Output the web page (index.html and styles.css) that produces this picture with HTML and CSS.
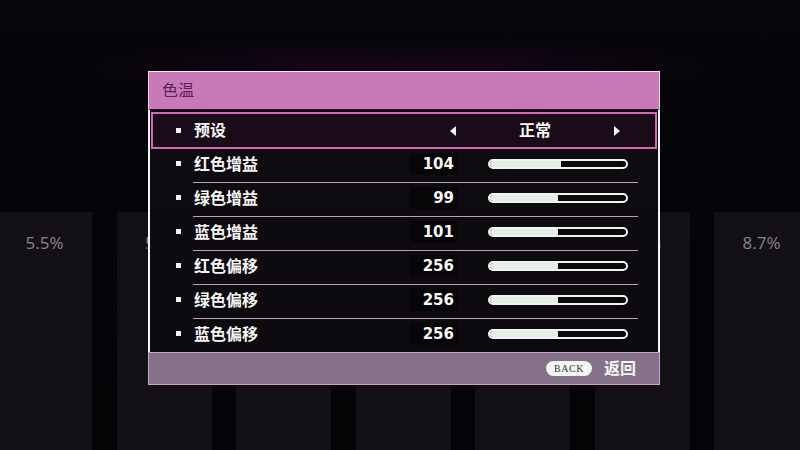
FILE: index.html
```html
<!DOCTYPE html>
<html lang="zh-CN">
<head>
    <meta charset="UTF-8">
    <meta name="viewport" content="width=device-width, initial-scale=1.0">
    <title>色温</title>
    <link rel="stylesheet" href="styles.css">
</head>
<body>
    <div class="screen">
        <!-- chart columns behind the OSD -->
        <div class="chart">
            <div class="chart-col"><span class="chart-pct">5.5%</span></div>
            <div class="chart-col"><span class="chart-pct">5.6%</span></div>
            <div class="chart-col"><span class="chart-pct">6.1%</span></div>
            <div class="chart-col"><span class="chart-pct">7.0%</span></div>
            <div class="chart-col"><span class="chart-pct">7.4%</span></div>
            <div class="chart-col"><span class="chart-pct">8.1%</span></div>
            <div class="chart-col"><span class="chart-pct">8.7%</span></div>
        </div>

        <div class="osd">
            <div class="osd-title">色温</div>
            <div class="osd-body">
                <div class="row row-selected">
                    <span class="bullet"></span>
                    <span class="label">预设</span>
                    <span class="arrow arrow-left"></span>
                    <span class="choice">正常</span>
                    <span class="arrow arrow-right"></span>
                </div>

                <div class="row">
                    <span class="bullet"></span>
                    <span class="label">红色增益</span>
                    <span class="value">104</span>
                    <span class="slider"><span class="slider-fill" style="width: 52%"></span></span>
                </div>
                <div class="sep"></div>
                <div class="row">
                    <span class="bullet"></span>
                    <span class="label">绿色增益</span>
                    <span class="value">99</span>
                    <span class="slider"><span class="slider-fill" style="width: 50%"></span></span>
                </div>
                <div class="sep"></div>
                <div class="row">
                    <span class="bullet"></span>
                    <span class="label">蓝色增益</span>
                    <span class="value">101</span>
                    <span class="slider"><span class="slider-fill" style="width: 50%"></span></span>
                </div>
                <div class="sep"></div>
                <div class="row">
                    <span class="bullet"></span>
                    <span class="label">红色偏移</span>
                    <span class="value">256</span>
                    <span class="slider"><span class="slider-fill" style="width: 50%"></span></span>
                </div>
                <div class="sep"></div>
                <div class="row">
                    <span class="bullet"></span>
                    <span class="label">绿色偏移</span>
                    <span class="value">256</span>
                    <span class="slider"><span class="slider-fill" style="width: 50%"></span></span>
                </div>
                <div class="sep"></div>
                <div class="row">
                    <span class="bullet"></span>
                    <span class="label">蓝色偏移</span>
                    <span class="value">256</span>
                    <span class="slider"><span class="slider-fill" style="width: 50%"></span></span>
                </div>
            </div>
            <div class="osd-footer">
                <span class="back-pill">BACK</span>
                <span class="back-text">返回</span>
            </div>
        </div>
    </div>
</body>
</html>
```

FILE: styles.css
```css
body{
    margin: 0;
    background-color: #050306;
    font-family: "Noto Sans CJK SC", "Noto Sans", sans-serif;
}
.screen{
    position: relative;
    width: 800px;
    height: 450px;
    overflow: hidden;
    background:
        radial-gradient(ellipse 320px 30px at 400px 68px, rgba(50, 8, 45, 0.45), transparent),
        linear-gradient(#06050a, #050306);
}

/***************** -chart- *******************/

.chart{
    display: flex;
    gap: 24.5px;
    margin-left: -3px;
    padding-top: 212px;
}
.chart-col{
    flex: none;
    width: 95px;
    height: 238px;
    background-color: #131015;
    text-align: center;
}
.chart-pct{
    display: block;
    margin-top: 19px;
    font-family: "Open Sans", "Noto Sans", sans-serif;
    font-size: 17px;
    color: #8a8486;
}

/***************** -osd- *******************/

.osd{
    position: absolute;
    left: 148px;
    top: 71px;
    width: 512px;
    border-top: 1px solid #f3eef3;
}
.osd-title{
    height: 37px;
    padding-left: 13px;
    background-color: #c87ab6;
    border-left: 1px solid #e8d0e4;
    border-right: 1px solid #e8d0e4;
    color: #5c205e;
    font-size: 16px;
    line-height: 35px;
}
.osd-body{
    padding: 2px 0 0;
    background: linear-gradient(#0e0c11, #0c0a0e);
    border-left: 2px solid #f1f4f1;
    border-right: 2px solid #f1f4f1;
    border-top: 1px solid #2a0d28;
}
/* row contents sit a little above the middle, close to the line above */
.row{
    box-sizing: border-box;
    display: flex;
    align-items: center;
    height: 33px;
    padding-bottom: 4px;
}
.row-selected{
    box-sizing: content-box;
    margin: 0 1px;
    padding-bottom: 0;
    border: 2px solid #d665b7;
    background-color: #1a0b19;
}
.row-selected .bullet{
    margin-left: 23px;
}
.bullet{
    flex: none;
    width: 5px;
    height: 5px;
    margin-left: 26px;
    background-color: #f4f4f4;
}
/* CJK glyphs sit low in their box, so lift them with bottom padding */
.label{
    width: 216px;
    margin-left: 13px;
    padding-bottom: 2px;
    color: #f6f6f4;
    font-size: 16px;
    font-weight: 700;
    line-height: 1;
}
.row-selected .label,
.row-selected .choice{
    padding-bottom: 3px;
}
.value{
    width: 44px;
    height: 22px;
    padding-right: 4px;
    background-color: #060507;
    color: #f6f6f4;
    font-family: "DejaVu Sans", sans-serif;
    font-size: 15px;
    font-weight: 700;
    line-height: 22px;
    text-align: right;
}
.slider{
    display: flex;
    width: 136px;
    height: 6px;
    margin-left: 30px;
    border: 2px solid #eef4ee;
    border-radius: 6px;
    background-color: #0a090b;
    overflow: hidden;
}
.slider-fill{
    background-color: #e6ece6;
}
.sep{
    height: 1px;
    margin: 0 20px 0 43px;
    background-color: #b7a5b6;
}

/* preset selector arrows */
.arrow{
    width: 0;
    height: 0;
    border-top: 5px solid transparent;
    border-bottom: 5px solid transparent;
}
.arrow-left{
    margin-left: 40px;
    border-right: 6px solid #f4f4f4;
}
.arrow-right{
    border-left: 6px solid #f4f4f4;
}
.choice{
    width: 158px;
    color: #f6f6f4;
    font-size: 16px;
    font-weight: 700;
    line-height: 1;
    text-align: center;
}

/***************** -footer- *******************/

.osd-footer{
    display: flex;
    align-items: center;
    justify-content: flex-end;
    height: 31px;
    padding-right: 23px;
    background-color: #85708a;
    border: 1px solid #c9a3c8;
}
.back-pill{
    width: 46px;
    height: 15px;
    border-radius: 8px;
    background-color: #f4f6f4;
    color: #2d3a33;
    font-family: "Liberation Serif", serif;
    font-size: 10px;
    letter-spacing: 0.5px;
    line-height: 15px;
    text-align: center;
}
.back-text{
    margin-left: 12px;
    padding-bottom: 4px;
    color: #f6f6f4;
    font-size: 16px;
    font-weight: 700;
    line-height: 1;
}
```
